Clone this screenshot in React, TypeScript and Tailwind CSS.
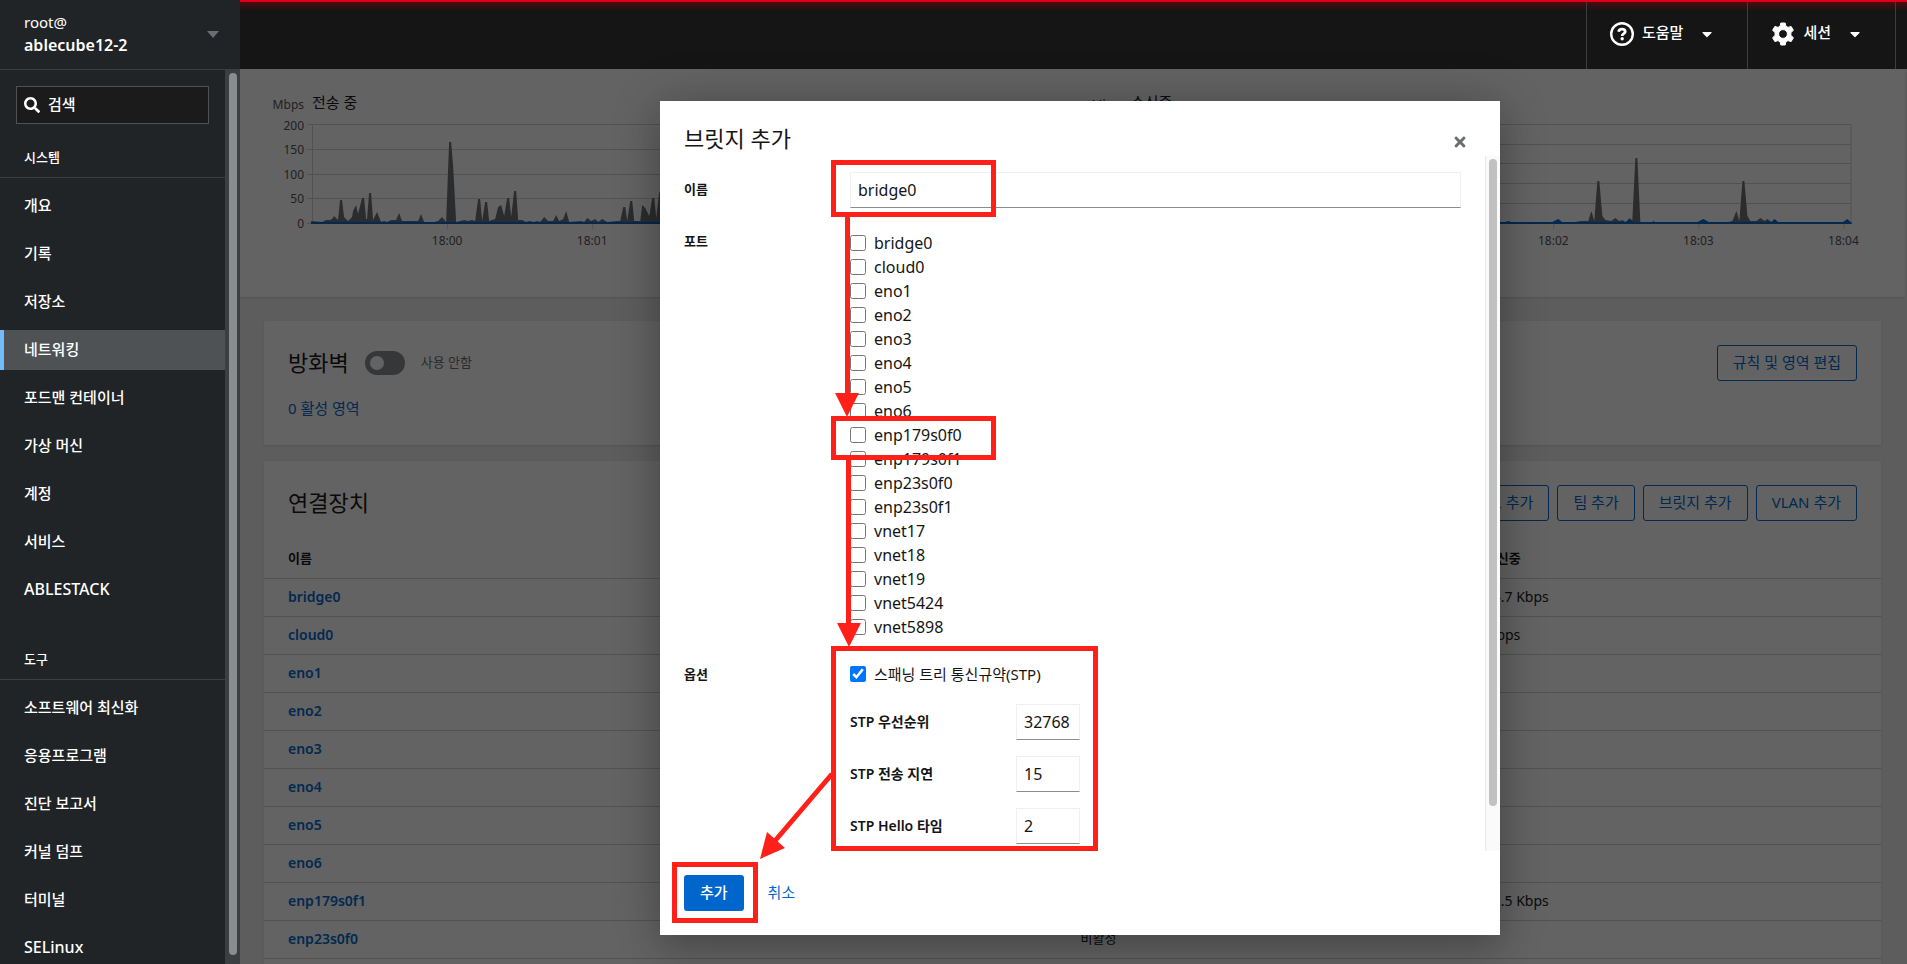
import { useState } from "react";
import { FaCaretDown, FaSearch, FaTimes } from "react-icons/fa";

type Port = { name: string; checked: boolean };

type InterfaceRow = {
  name: string;
  address: string;
  sending: string;
  receiving: string;
};

type ChartSeries = {
  title: string;
  path: string;
  bumps: string;
  gridLines: number[];
  labels: { text: string; y: number }[];
  times: { text: string; x: number }[];
};

const SYSTEM_ITEMS = [
  "개요",
  "기록",
  "저장소",
  "네트워킹",
  "포드맨 컨테이너",
  "가상 머신",
  "계정",
  "서비스",
  "ABLESTACK",
];

const TOOL_ITEMS = [
  "소프트웨어 최신화",
  "응용프로그램",
  "진단 보고서",
  "커널 덤프",
  "터미널",
  "SELinux",
];

const ACTIVE_ITEM = "네트워킹";

const PORT_NAMES = [
  "bridge0",
  "cloud0",
  "eno1",
  "eno2",
  "eno3",
  "eno4",
  "eno5",
  "eno6",
  "enp179s0f0",
  "enp179s0f1",
  "enp23s0f0",
  "enp23s0f1",
  "vnet17",
  "vnet18",
  "vnet19",
  "vnet5424",
  "vnet5898",
];

const STP_FIELDS = [
  { id: "stp-priority", label: "STP 우선순위", value: "32768" },
  { id: "stp-delay", label: "STP 전송 지연", value: "15" },
  { id: "stp-hello", label: "STP Hello 타임", value: "2" },
];

const INTERFACES: InterfaceRow[] = [
  { name: "bridge0", address: "", sending: "", receiving: "34.7 Kbps" },
  { name: "cloud0", address: "", sending: "", receiving: "0 bps" },
  { name: "eno1", address: "", sending: "비활성", receiving: "" },
  { name: "eno2", address: "", sending: "비활성", receiving: "" },
  { name: "eno3", address: "", sending: "비활성", receiving: "" },
  { name: "eno4", address: "", sending: "비활성", receiving: "" },
  { name: "eno5", address: "", sending: "비활성", receiving: "" },
  { name: "eno6", address: "", sending: "비활성", receiving: "" },
  { name: "enp179s0f1", address: "", sending: "", receiving: "32.5 Kbps" },
  { name: "enp23s0f0", address: "", sending: "비활성", receiving: "" },
];

const SENDING: ChartSeries = {
  title: "전송 중",
  path:
    "M47 144 V141 L58 142 L62 140 H66 L68 139 L70 136 L74 140 L76 120 H78 L80 137 L84 141 L88 137 L89 131 L92 125 L94 134 L98 118 H100 L102 139 H103 L105 113 H107 L109 140 L113 132 L117 142 L120 141 L123 142 L127 140 H132 L135 133 L138 141 L143 141 H154 L157 134 L160 142 L170 142 L174 141 L178 137 L182 142 L185 62 H187 L189 86 L192 142 L200 140 L204 141 L208 140 L211 141 L214 119 H216 L218 141 L221 122 H223 L225 141 L231 139 L234 127 L237 125 L240 136 L243 118 H245 L247 137 L250 111 H252 L254 140 L258 140 L262 142 L265 141 L270 142 L273 141 L276 142 L280 137 L284 141 H289 L292 135 L295 141 L299 139 L302 131 L305 142 L317 141 L320 142 L323 138 L327 141 L331 139 L334 142 L338 139 L343 142 L353 141 L356 141 L359 127 H361 L363 141 L366 121 H368 L370 141 H376 L378 125 L381 128 L385 136 L388 118 H390 L392 138 L395 112 H397 L399 141 L440 142 H560 V144 Z",
  bumps: "",
  gridLines: [44, 69, 94, 118],
  labels: [
    { text: "200", y: 50 },
    { text: "150", y: 74 },
    { text: "100", y: 99 },
    { text: "50", y: 123 },
    { text: "0", y: 148 },
  ],
  times: [
    { text: "18:00", x: 183 },
    { text: "18:01", x: 328 },
  ],
};

const RECEIVING: ChartSeries = {
  title: "수신중",
  path:
    "M440 143 L448 142 L456 143 L474 142 L485 143 L498 141 L505 141 L508 131 L511 141 L514 101 H516 L519 136 L522 140 L528 141 L532 138 L536 141 L539 140 L542 142 L546 139 L549 140 L552 78 H554 L557 142 H645 L649 141 L653 131 L656 141 L659 101 H661 L664 136 L667 141 L673 141 L677 138 L681 141 L684 139 L688 142 H768 V144 Z",
  bumps:
    "M467 143 L471 141 L475 139 L480 143 Z M543 143 L546 138 L550 143 Z M568 143 L570 141 L573 143 Z M612 143 L620 139 L627 143 Z M687 143 L691 139 L696 143 Z M758 143 L764 139 L768 143 Z M419 143 L425 141 L431 143 Z",
  gridLines: [44, 64, 83, 103, 123],
  labels: [],
  times: [
    { text: "18:02", x: 470 },
    { text: "18:03", x: 615 },
    { text: "18:04", x: 760 },
  ],
};

function NavItem({ label }: { label: string }) {
  const active = label === ACTIVE_ITEM;
  const latin = /^[A-Za-z]+$/.test(label);

  return (
    <li className={latin ? "text-base" : "text-[15px]"}>
      <a
        href="#"
        className={
          active
            ? "flex h-10 items-center border-l-4 border-[#73bcf7] bg-[#4f5255] pb-[2px] pl-5 text-white"
            : "flex h-10 items-center pb-[2px] pl-6 text-white"
        }
      >
        {label}
      </a>
    </li>
  );
}

function Sidebar() {
  return (
    <aside className="flex w-60 shrink-0 flex-col bg-[#212427] text-[15px] leading-6 font-medium text-white">
      <button
        type="button"
        className="flex h-[70px] shrink-0 items-center justify-between border-b border-[#3c3f42] pr-[21px] pl-6 text-left"
      >
        <span className="pb-[3px]">
          <span className="block font-normal">root@</span>
          <span className="block text-base leading-[23px] font-semibold">
            ablecube12-2
          </span>
        </span>
        <svg className="h-[7px] w-3" viewBox="0 0 12 7" fill="#6a6e73">
          <path d="M0 0 H12 L6 7 Z" />
        </svg>
      </button>
      <div className="flex min-h-0 flex-1">
        <nav className="min-w-0 flex-1 overflow-hidden">
          <div className="mx-4 mt-4 flex h-[38px] items-center gap-2 border border-[#4f5255] bg-[#1b1b1b] px-[7px]">
            <FaSearch className="size-4 shrink-0" aria-hidden />
            <input
              type="search"
              aria-label="검색"
              placeholder="검색"
              className="w-full min-w-0 bg-transparent pb-[2px] text-[15px] outline-none placeholder:text-white"
            />
          </div>
          <h2 className="mt-[21px] border-b border-[#3c3f42] pb-2 pl-6 text-[13px]">
            시스템
          </h2>
          <ul className="mt-2 flex flex-col gap-2">
            {SYSTEM_ITEMS.map((item) => (
              <NavItem key={item} label={item} />
            ))}
          </ul>
          <h2 className="mt-[37px] border-b border-[#3c3f42] pb-2 pl-6 text-[13px]">
            도구
          </h2>
          <ul className="mt-2 flex flex-col gap-2">
            {TOOL_ITEMS.map((item) => (
              <NavItem key={item} label={item} />
            ))}
          </ul>
        </nav>
        <div className="w-[15px] bg-[#3c3f42] px-1 pt-[3px] pb-[9px]">
          <div className="h-full w-2 rounded-full bg-[#8a8d90]" />
        </div>
      </div>
    </aside>
  );
}

function HelpIcon() {
  return (
    <svg className="size-6" viewBox="0 0 24 24" fill="none" stroke="#fff">
      <circle cx="12" cy="12" r="10.8" strokeWidth="2.4" />
      <path
        d="M8.6 9.8 C9 7.8 10.4 7.2 12 7.2 C13.8 7.2 15.2 8.2 15.2 9.8 C15.2 11.8 12.2 11.6 12.2 14"
        strokeWidth="2.8"
      />
      <circle cx="12.2" cy="16.8" r="1.7" fill="#fff" stroke="none" />
    </svg>
  );
}

function GearIcon() {
  return (
    <svg className="size-6" viewBox="0 0 24 24" fill="#fff">
      <path
        fillRule="evenodd"
        stroke="#fff"
        strokeLinejoin="round"
        d="M9.8 1 H14.2 L14.9 4.2 L17 5.4 L20.1 4.4 L22.4 8.3 L19.9 10.6 V13.4 L22.4 15.7 L20.1 19.6 L17 18.6 L14.9 19.8 L14.2 23 H9.8 L9.1 19.8 L7 18.6 L3.9 19.6 L1.6 15.7 L4.1 13.4 V10.6 L1.6 8.3 L3.9 4.4 L7 5.4 L9.1 4.2 Z M12 7.6 A4.4 4.4 0 1 0 12 16.4 A4.4 4.4 0 1 0 12 7.6 Z"
      />
    </svg>
  );
}

function Masthead() {
  return (
    <header className="h-[69px] shrink-0 border-t-2 border-[#e00016] bg-[#151515]">
      <div className="flex h-full justify-end bg-linear-to-b from-[#4d0a12] to-transparent to-[9px] pr-[11px] text-[15px] font-medium text-white">
        <button
          type="button"
          className="flex items-center gap-2 border-l border-[#3c3f42] pr-8 pb-1 pl-[23px]"
        >
          <HelpIcon />
          <span className="pb-[2px]">도움말</span>
          <FaCaretDown className="ml-2 size-4" aria-hidden />
        </button>
        <button
          type="button"
          className="flex items-center gap-2 border-x border-[#3c3f42] pr-8 pb-1 pl-[23px]"
        >
          <GearIcon />
          <span className="pb-[2px]">세션</span>
          <FaCaretDown className="ml-2 size-4" aria-hidden />
        </button>
      </div>
    </header>
  );
}

function TrafficChart({ series }: { series: ChartSeries }) {
  return (
    <svg
      className="w-full"
      viewBox="0 0 798 180"
      role="img"
      aria-label={series.title}
    >
      <g fill="#4f5255" fontSize="12">
        <text x="40" y="29" textAnchor="end">
          Mbps
        </text>
        {series.labels.map((label) => (
          <text key={label.text} x="40" y={label.y} textAnchor="end">
            {label.text}
          </text>
        ))}
        {series.times.map((time) => (
          <text key={time.text} x={time.x} y="165" textAnchor="middle">
            {time.text}
          </text>
        ))}
      </g>
      <text x="48" y="28" fill="#151515" fontSize="15">
        {series.title}
      </text>
      <g stroke="#d2d2d2">
        {series.gridLines.map((y) => (
          <path key={y} d={`M43 ${y + 0.5} H768`} />
        ))}
        <path d="M43 143.5 H48 M48.5 44 V144 M767.5 44 V144" />
        {series.times.map((time) => (
          <path key={time.text} d={`M${time.x + 0.5} 144 V149`} />
        ))}
      </g>
      <path d={series.path} fill="#6a6e73" />
      <path d={series.bumps} fill="#0066cc" />
      <path d="M47 143 H768" stroke="#0066cc" strokeWidth="2" />
    </svg>
  );
}

function OutlineButton({ children }: { children: string }) {
  return (
    <button
      type="button"
      className="h-9 rounded-[3px] border border-[#0066cc] px-[15px] pb-[2px] text-[15px] text-[#0066cc]"
    >
      {children}
    </button>
  );
}

function NetworkingPage() {
  return (
    <main className="min-h-0 flex-1 overflow-hidden bg-[#f0f0f0] text-[#151515]">
      <section className="mr-[2px] grid h-[228px] grid-cols-2 gap-5 bg-white px-6 pt-[11px] shadow">
        <TrafficChart series={SENDING} />
        <TrafficChart series={RECEIVING} />
      </section>

      <div className="mr-[2px] flex flex-col gap-4 p-6">
        <section className="flex h-[124px] items-start justify-between bg-white p-6 shadow-sm">
          <div>
            <div className="flex h-9 items-center">
              <h2 className="pb-[2px] text-[22px]">방화벽</h2>
              <button
                type="button"
                role="switch"
                aria-checked="false"
                aria-label="방화벽"
                className="mx-4 flex h-6 w-10 items-center rounded-full bg-[#8a8d90] px-[5px]"
              >
                <span className="size-[14px] rounded-full bg-white" />
              </button>
              <span className="text-[13px] text-[#6a6e73]">사용 안함</span>
            </div>
            <a href="#" className="mt-[15px] block text-[15px] leading-6 text-[#0066cc]">
              0 활성 영역
            </a>
          </div>
          <OutlineButton>규칙 및 영역 편집</OutlineButton>
        </section>

        <section className="bg-white pt-6 pb-8 shadow-sm">
          <div className="flex items-center justify-between px-6">
            <h2 className="pb-[2px] text-[22px] leading-8">연결장치</h2>
            <div className="flex gap-2">
              <OutlineButton>본드 추가</OutlineButton>
              <OutlineButton>팀 추가</OutlineButton>
              <OutlineButton>브릿지 추가</OutlineButton>
              <OutlineButton>VLAN 추가</OutlineButton>
            </div>
          </div>
          <table className="mt-[18px] w-full table-fixed text-left text-[13px]">
            <thead>
              <tr className="h-[39px] border-b border-[#d2d2d2]">
                <th className="pl-6">이름</th>
                <th className="pl-2">IP 주소</th>
                <th className="pl-2">전송 중</th>
                <th className="pl-2">수신중</th>
              </tr>
            </thead>
            <tbody>
              {INTERFACES.map((row) => (
                <tr key={row.name} className="h-[38px] border-b border-[#d2d2d2]">
                  <td className="pl-6 text-sm font-semibold">
                    <a href="#" className="text-[#0066cc]">
                      {row.name}
                    </a>
                  </td>
                  <td className="pl-2">{row.address}</td>
                  <td className="pl-2">{row.sending}</td>
                  <td className="pl-2 text-sm">{row.receiving}</td>
                </tr>
              ))}
            </tbody>
          </table>
        </section>
      </div>
    </main>
  );
}

function Annotations() {
  return (
    <svg
      className="pointer-events-none absolute top-0 left-0 h-[834px] w-[840px]"
      viewBox="660 101 840 834"
      aria-hidden
    >
      <g fill="none" stroke="#ff2119" strokeWidth="5">
        <rect x="833.5" y="162.5" width="160" height="52" />
        <rect x="833.5" y="418.5" width="160" height="39" />
        <rect x="833.5" y="648.5" width="262" height="200" />
        <rect x="674.5" y="864.5" width="81" height="56" />
        <path d="M847.5 217 V394 M848.5 460 V624 M832 774 L774 842" />
      </g>
      <g fill="#ff2119">
        <path d="M835 393 H859 L847 417 Z" />
        <path d="M837 623 H861 L849 647 Z" />
        <path d="M760 859 L767 832 L785 848 Z" />
      </g>
    </svg>
  );
}

function BridgeDialog() {
  const [name, setName] = useState("bridge0");
  const [ports, setPorts] = useState<Port[]>(
    PORT_NAMES.map((portName) => ({ name: portName, checked: false })),
  );
  const [stp, setStp] = useState(true);

  function togglePort(portName: string) {
    setPorts((prev) =>
      prev.map((port) =>
        port.name === portName ? { ...port, checked: !port.checked } : port,
      ),
    );
  }

  return (
    <div
      role="dialog"
      aria-labelledby="bridge-title"
      className="relative flex h-full w-1/2 flex-col bg-white text-[#151515] shadow-[0_16px_32px_rgba(3,3,3,0.16),0_0_48px_rgba(3,3,3,0.2)]"
    >
      <header className="flex h-[55px] shrink-0 items-start justify-between pt-[21px] pr-8 pl-6">
        <h1 id="bridge-title" className="text-[22px] leading-8">
          브릿지 추가
        </h1>
        <button type="button" aria-label="닫기" className="mt-3 text-[#6a6e73]">
          <FaTimes className="size-4" />
        </button>
      </header>

      <div className="flex min-h-0 flex-1">
        <form className="grid min-w-0 flex-1 grid-cols-[166px_1fr] content-start gap-y-[23px] overflow-hidden pt-4 pr-6 pl-6 text-base">
          <label htmlFor="bridge-name" className="pt-[7px] text-[13px] leading-5 font-bold">
            이름
          </label>
          <input
            id="bridge-name"
            value={name}
            onChange={(event) => setName(event.target.value)}
            className="h-9 w-full border border-[#f0f0f0] border-b-[#8a8d90] px-[7px] outline-none"
          />

          <span className="text-[13px] leading-5 font-bold">포트</span>
          <div>
            {ports.map((port) => (
              <label key={port.name} className="flex h-6 items-center gap-2">
                <input
                  type="checkbox"
                  checked={port.checked}
                  onChange={() => togglePort(port.name)}
                  className="size-4"
                />
                {port.name}
              </label>
            ))}
          </div>

          <span className="text-[13px] leading-6 font-bold">옵션</span>
          <div>
            <label className="flex h-6 items-center gap-2 text-[15px]">
              <input
                type="checkbox"
                checked={stp}
                onChange={(event) => setStp(event.target.checked)}
                className="size-4 accent-[#0075ff]"
              />
              스패닝 트리 통신규약(STP)
            </label>
            <div className="mt-[18px] grid grid-cols-[166px_64px] items-center gap-y-4">
              {STP_FIELDS.map((field) => (
                <div key={field.id} className="contents">
                  <label htmlFor={field.id} className="text-sm font-semibold">
                    {field.label}
                  </label>
                  <input
                    id={field.id}
                    defaultValue={field.value}
                    className="h-9 w-full border border-[#f0f0f0] border-b-[#8a8d90] pl-[7px] outline-none"
                  />
                </div>
              ))}
            </div>
          </div>
        </form>
        <div className="w-[15px] border-l border-[#e8e8e8] bg-[#fafafa] pt-[3px] pr-[3px] pb-[45px] pl-[3px]">
          <div className="h-full w-2 rounded-full bg-[#c1c1c1]" />
        </div>
      </div>

      <footer className="flex shrink-0 items-center gap-2 p-6 text-[15px]">
        <button
          type="button"
          className="h-9 rounded-[3px] bg-[#0066cc] px-4 pb-[2px] font-medium text-white"
        >
          추가
        </button>
        <button type="button" className="h-9 px-4 pb-[2px] text-[#0066cc]">
          취소
        </button>
      </footer>

      <Annotations />
    </div>
  );
}

export default function App() {
  return (
    <div className="flex h-screen overflow-hidden font-['Noto_Sans','Noto_Sans_CJK_KR',sans-serif]">
      <Sidebar />
      <div className="relative flex min-w-0 flex-1 flex-col">
        <Masthead />
        <NetworkingPage />
        <div className="absolute top-[69px] -right-[13px] -bottom-[3px] left-0 flex justify-center bg-[rgba(3,3,3,0.62)] py-8">
          <BridgeDialog />
        </div>
      </div>
    </div>
  );
}
